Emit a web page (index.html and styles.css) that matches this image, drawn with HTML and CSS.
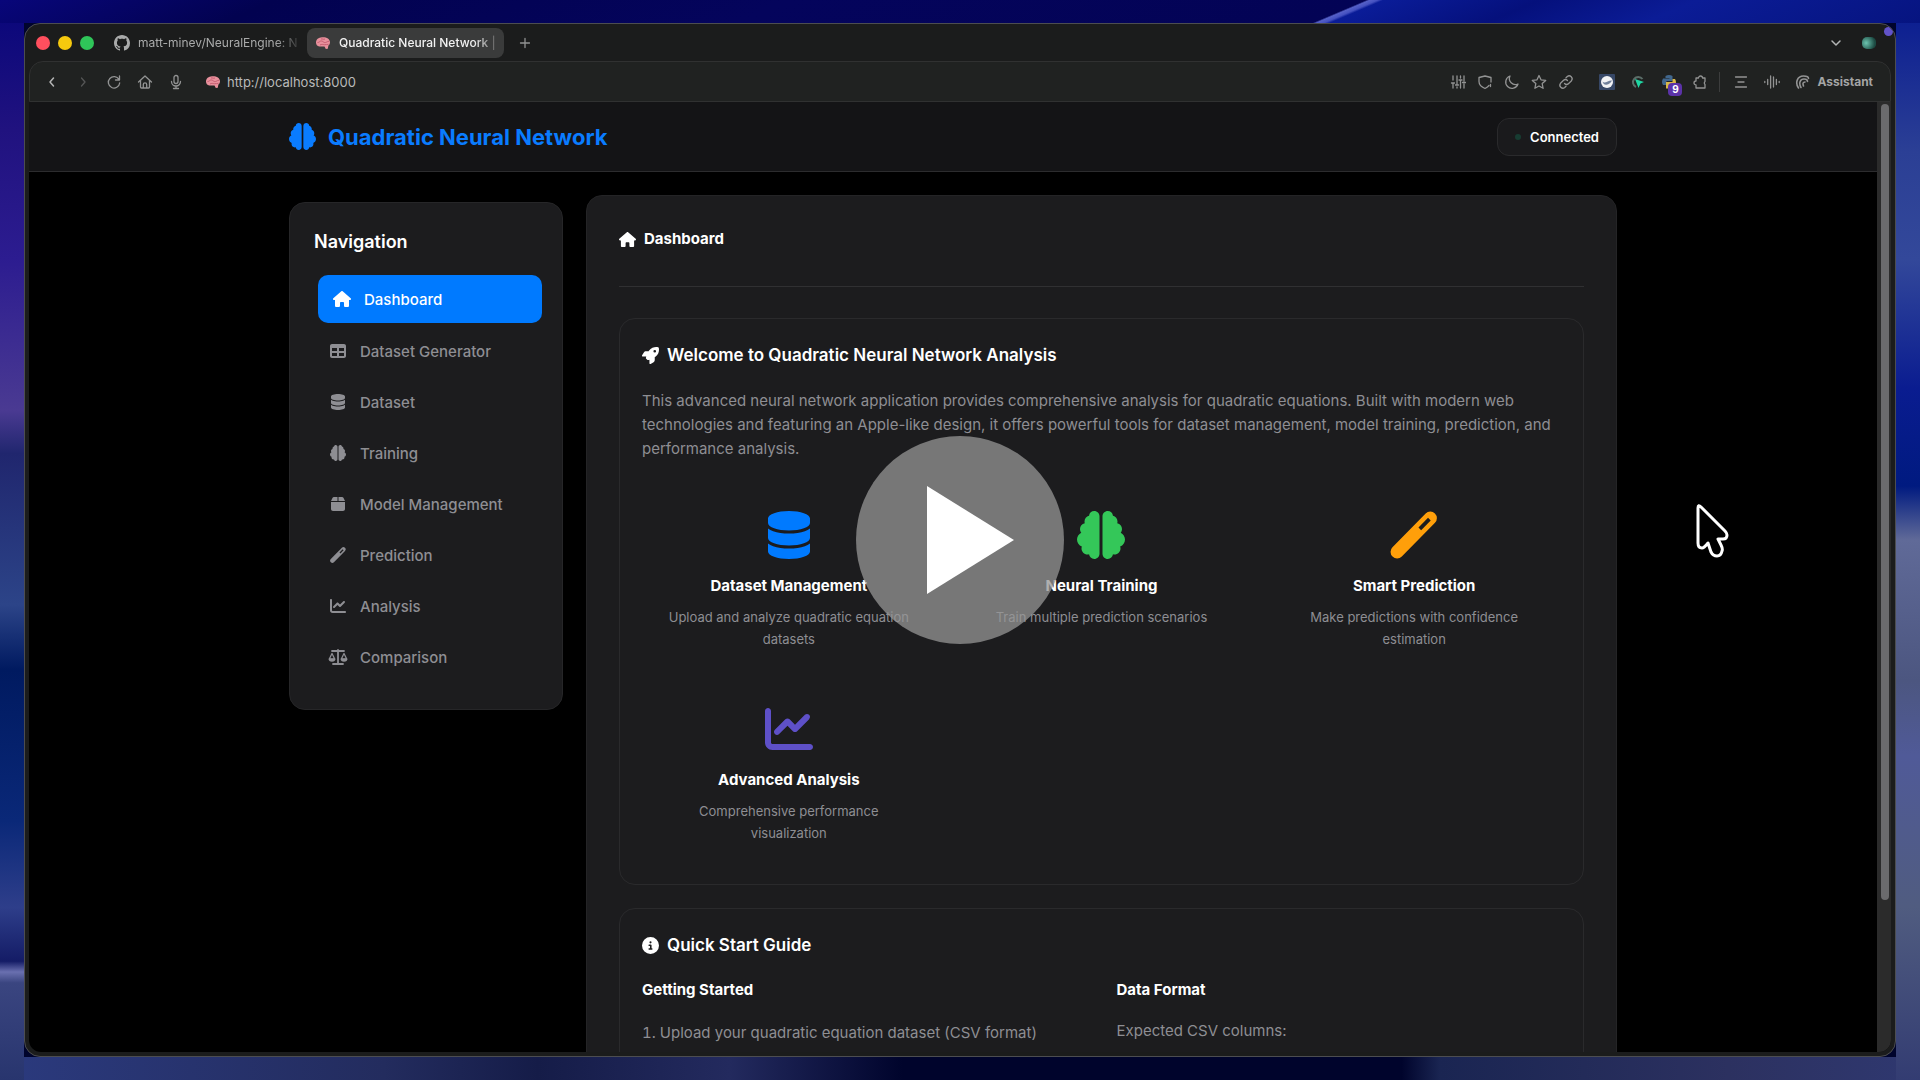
FILE: index.html
```html
<!DOCTYPE html>
<html lang="en">
<head>
<meta charset="utf-8">
<meta name="viewport" content="width=device-width, initial-scale=1">
<title>Quadratic Neural Network</title>
<link rel="stylesheet" href="styles.css">
</head>
<body class="desktop">
<svg class="defs" width="0" height="0" aria-hidden="true">
  <symbol id="house" viewBox="0 0 576 512"><path d="M575.8 255.5c0 18-15 32.1-32 32.1h-32l.7 160.2c0 2.7-.2 5.4-.5 8.1V472c0 22.1-17.9 40-40 40H456c-1.1 0-2.2 0-3.3-.1c-1.4 .1-2.8 .1-4.2 .1H416 392c-22.1 0-40-17.9-40-40V448 384c0-17.7-14.3-32-32-32H256c-17.7 0-32 14.3-32 32v64 24c0 22.1-17.9 40-40 40H160 128.1c-1.5 0-3-.1-4.5-.2c-1.2 .1-2.4 .2-3.6 .2H104c-22.1 0-40-17.9-40-40V360c0-.9 0-1.9 .1-2.8V287.6H32c-18 0-32-14-32-32.1c0-9 3-17 10-24L266.4 8c7-7 15-8 22-8s15 2 21 7L564.8 231.5c8 7 12 15 11 24z"/></symbol>
  <symbol id="table" viewBox="0 0 512 512"><path d="M64 256V160H224v96H64zm0 64H224v96H64V320zm224 96V320H448v96H288zM448 256H288V160H448v96zM64 32C28.7 32 0 60.7 0 96V416c0 35.3 28.7 64 64 64H448c35.3 0 64-28.7 64-64V96c0-35.3-28.7-64-64-64H64z"/></symbol>
  <symbol id="database" viewBox="0 0 448 512"><path d="M448 80v48c0 44.2-100.3 80-224 80S0 172.2 0 128V80C0 35.8 100.3 0 224 0S448 35.8 448 80zM393.2 214.7c20.8-7.4 39.9-16.9 54.8-28.6V288c0 44.2-100.3 80-224 80S0 332.2 0 288V186.1c14.9 11.8 34 21.2 54.8 28.6C99.7 230.7 159.5 240 224 240s124.3-9.3 169.2-25.3zM0 346.1c14.9 11.8 34 21.2 54.8 28.6C99.7 390.7 159.5 400 224 400s124.3-9.3 169.2-25.3c20.8-7.4 39.9-16.9 54.8-28.6V432c0 44.2-100.3 80-224 80S0 476.2 0 432V346.1z"/></symbol>
  <symbol id="brain" viewBox="0 0 512 512"><path d="M184 0c30.9 0 56 25.1 56 56V456c0 30.9-25.1 56-56 56c-28.9 0-52.7-21.9-55.7-50.1c-5.2 1.4-10.7 2.1-16.3 2.1c-35.3 0-64-28.7-64-64c0-7.4 1.3-14.6 3.6-21.2C21.4 367.4 0 338.2 0 304c0-31.9 18.7-59.5 45.8-72.3C37.1 220.8 32 207 32 192c0-30.7 21.6-56.3 50.4-62.6C80.8 123.9 80 118 80 112c0-29.9 20.6-55.1 48.3-62.1C131.3 21.9 155.1 0 184 0zM328 0c28.9 0 52.6 21.9 55.7 49.9c27.8 7 48.3 32.1 48.3 62.1c0 6-.8 11.9-2.4 17.4c28.8 6.2 50.4 31.9 50.4 62.6c0 15-5.1 28.8-13.8 39.7C493.3 244.5 512 272.1 512 304c0 34.2-21.4 63.4-51.6 74.8c2.3 6.6 3.6 13.8 3.6 21.2c0 35.3-28.7 64-64 64c-5.6 0-11.1-.7-16.3-2.1c-3 28.2-26.8 50.1-55.7 50.1c-30.9 0-56-25.1-56-56V56c0-30.9 25.1-56 56-56z"/></symbol>
  <symbol id="box" viewBox="0 0 448 512"><path d="M50.7 58.5L0 160H208V32H93.7C75.5 32 58.9 42.3 50.7 58.5zM240 160H448L397.3 58.5C389.1 42.3 372.5 32 354.3 32H240V160zm208 32H0V416c0 35.3 28.7 64 64 64H384c35.3 0 64-28.7 64-64V192z"/></symbol>
  <symbol id="vial" viewBox="0 0 512 512"><path fill="none" stroke="currentColor" stroke-width="140" stroke-linecap="round" d="M76 436 430 76"/><path class="vial-gap" stroke-width="40" d="M318 190 420 86"/></symbol>
  <symbol id="chart" viewBox="0 0 512 512"><path d="M64 64c0-17.7-14.3-32-32-32S0 46.3 0 64V400c0 44.2 35.8 80 80 80H480c17.7 0 32-14.3 32-32s-14.3-32-32-32H80c-8.8 0-16-7.2-16-16V64zm406.6 86.6c12.5-12.5 12.5-32.8 0-45.3s-32.8-12.5-45.3 0L320 210.7l-57.4-57.4c-12.5-12.5-32.8-12.5-45.3 0l-112 112c-12.5 12.5-12.5 32.8 0 45.3s32.8 12.5 45.3 0L240 221.3l57.4 57.4c12.5 12.5 32.8 12.5 45.3 0l128-128z"/></symbol>
  <symbol id="scale" viewBox="0 0 20 16"><g fill="none" stroke="currentColor" stroke-width="1.8" stroke-linecap="round" stroke-linejoin="round"><path d="M4 2h12M10 1v14M5 15h10"/><path d="M4 4.500 1.300 10h5.400zM16 4.500 13.300 10h5.400z" stroke-width="1.300"/></g><path d="M.6 9.800h6.800a3.400 3 0 0 1-6.800 0zM12.600 9.800h6.800a3.400 3 0 0 1-6.800 0z"/></symbol>
  <symbol id="rocket" viewBox="0 0 512 512"><path d="M156.6 384.9L125.7 354c-8.5-8.5-11.5-20.8-7.7-32.2c3-8.9 7-20.5 11.8-33.8L24 288c-8.6 0-16.6-4.6-20.9-12.1s-4.2-16.7 .2-24.1l52.5-88.5c13-21.9 36.5-35.3 61.9-35.3l82.3 0c2.4-4 4.8-7.7 7.2-11.3C289.1-4.1 411.1-8.1 483.9 5.300c11.6 2.1 20.6 11.2 22.8 22.8c13.4 72.9 9.3 194.8-111.4 276.7c-3.5 2.4-7.3 4.8-11.3 7.2v82.3c0 25.4-13.4 49-35.3 61.9l-88.5 52.5c-7.4 4.4-16.6 4.5-24.1 .2s-12.1-12.2-12.1-20.9V380.8c-14.1 4.9-26.4 8.9-35.7 11.9c-11.2 3.6-23.4 .5-31.8-7.8zM384 168a40 40 0 1 0 0-80 40 40 0 1 0 0 80z"/></symbol>
  <symbol id="info" viewBox="0 0 512 512"><path d="M256 512A256 256 0 1 0 256 0a256 256 0 1 0 0 512zM216 336h24V272H216c-13.3 0-24-10.7-24-24s10.7-24 24-24h48c13.3 0 24 10.7 24 24v88h8c13.3 0 24 10.7 24 24s-10.7 24-24 24H216c-13.3 0-24-10.7-24-24s10.7-24 24-24zm40-208a32 32 0 1 1 0 64 32 32 0 1 1 0-64z"/></symbol>
  <symbol id="favicon" viewBox="0 0 16 16"><path fill="#e8909c" d="M1 7.500C1 4.500 3.500 2.500 7 2.300c4.500-.3 8 1.700 8 5 0 1.500-.6 2.700-1.600 3.200l-.6 3.200-2 .3-1.300-2.500H4.300C2.300 11.300 1 9.700 1 7.500z"/><path fill="none" stroke="#c2586c" stroke-width=".9" d="M2.500 7.500c2 .2 2-1.800 4-1.500s2 2 4 1.500 2-1.500 3.500-1M5 10c1.500-1 3-.5 4.500-.3s2.500-.4 4-.4M6 4c1.500-.5 2 .8 4 0"/></symbol>
</svg>

<div class="window">
  <header class="tabbar">
    <div class="lights"><span class="light red"></span><span class="light yellow"></span><span class="light green"></span></div>
    <button class="tab">
      <svg class="tab-icon" viewBox="0 0 16 16" fill="#f5f5f5"><path d="M8 0C3.58 0 0 3.58 0 8c0 3.54 2.29 6.53 5.47 7.59.4.07.55-.17.55-.38 0-.19-.01-.82-.01-1.49-2.01.37-2.53-.49-2.69-.94-.09-.23-.48-.94-.82-1.13-.28-.15-.68-.52-.01-.53.63-.01 1.08.58 1.23.82.72 1.21 1.87.87 2.33.66.07-.52.28-.87.51-1.07-1.78-.2-3.64-.89-3.64-3.95 0-.87.31-1.59.82-2.15-.08-.2-.36-1.02.08-2.12 0 0 .67-.21 2.2.82.64-.18 1.32-.27 2-.27s1.36.09 2 .27c1.53-1.04 2.2-.82 2.2-.82.44 1.100.16 1.920.08 2.120.51.56.82 1.270.82 2.150 0 3.070-1.870 3.750-3.650 3.950.29.25.54.73.54 1.480 0 1.070-.01 1.930-.01 2.200 0 .21.15.46.55.38A8.010 8.010 0 0 0 16 8c0-4.420-3.580-8-8-8z"/></svg>
      <span class="tab-label">matt-minev/NeuralEngine: N</span>
    </button>
    <button class="tab active">
      <svg class="tab-icon"><use href="#favicon"/></svg>
      <span class="tab-label">Quadratic Neural Network |</span>
    </button>
    <button class="tool" aria-label="New tab"><svg class="ico" viewBox="0 0 16 16"><path d="M8 3.500v9M3.500 8h9"/></svg></button>
    <span class="spacer"></span>
    <button class="tool" aria-label="Tab list"><svg class="ico bright" viewBox="0 0 16 16"><path d="m4 6 4 4 4-4"/></svg></button>
    <button class="tool" aria-label="Profile"><span class="avatar"></span></button>
  </header>

  <div class="toolbar">
    <button class="tool" aria-label="Back"><svg class="ico bright" viewBox="0 0 16 16"><path d="M9.500 4 6 8l3.500 4"/></svg></button>
    <button class="tool" aria-label="Forward"><svg class="ico faint" viewBox="0 0 16 16"><path d="m6.500 4 3.500 4-3.500 4"/></svg></button>
    <button class="tool" aria-label="Reload"><svg class="ico" viewBox="0 0 16 16"><path d="M13 5.500A5.700 5.700 0 1 0 13.700 9M13.500 2v4h-4"/></svg></button>
    <button class="tool" aria-label="Home"><svg class="ico" viewBox="0 0 16 16"><path d="M1.500 8 8 2l6.500 6M3.500 6.500V13a1 1 0 0 0 1 1h7a1 1 0 0 0 1-1V6.500M6.300 14v-3.500a1.700 1.700 0 0 1 3.400 0V14"/></svg></button>
    <button class="tool" aria-label="Voice"><svg class="ico" viewBox="0 0 16 16"><rect x="6" y="1.500" width="4" height="8" rx="2"/><path d="M3.500 7.500a4.500 4.500 0 0 0 9 0M8 12v2.500M5.500 14.500h5"/></svg></button>
    <label class="address"><svg class="tab-icon"><use href="#favicon"/></svg><input class="url" aria-label="Address" value="http://localhost:8000"></label>
    <div class="tools">
      <button class="tool" aria-label="Settings"><svg class="ico" viewBox="0 0 16 16"><path d="M3 2v4M3 9v5M1.500 9h3M7 2v8M7 13v1M5.500 11h3M10.500 2v2M10.500 7v7M9 6h3M14 2v5M14 10v4M12.500 8.500h3"/></svg></button>
      <button class="tool" aria-label="Protection"><svg class="ico" viewBox="0 0 16 16"><path d="M12 11.500C10.800 13 8 14.500 8 14.500S2 12 2 7.500v-4L8 2l6 1.500V8M13.500 10.500v2"/></svg></button>
      <button class="tool" aria-label="Dark mode"><svg class="ico" viewBox="0 0 16 16"><path d="M6 2a6.300 6.300 0 1 0 8 8A6 6 0 0 1 6 2z"/></svg></button>
      <button class="tool" aria-label="Bookmark"><svg class="ico" viewBox="0 0 16 16"><path d="m8 1.500 2 4.300 4.700.6-3.500 3.200.9 4.700L8 12l-4.100 2.300.9-4.700L1.300 6.400 6 5.800z"/></svg></button>
      <button class="tool" aria-label="Copy link"><svg class="ico" viewBox="0 0 16 16"><path d="M6.500 9.500a3 3 0 0 0 4.200 0l2.800-2.800a3 3 0 0 0-4.200-4.200L8 3.800M9.500 6.500a3 3 0 0 0-4.200 0L2.500 9.300a3 3 0 0 0 4.200 4.200L8 12.200"/></svg></button>
    </div>
    <div class="tools extensions">
      <button class="tool" aria-label="Extension"><svg class="plain" viewBox="0 0 16 16"><rect width="16" height="16" rx="1" fill="#364766"/><circle cx="8" cy="8" r="6" fill="#f1f2f4"/><path d="M3.500 7.500c2 3 6-1.500 9.500-1-1 2-3 4-5.500 4.200S4 9.500 3.500 7.500z" fill="#6f7f9a"/></svg></button>
      <button class="tool" aria-label="Grammar"><svg class="plain" viewBox="0 0 16 16"><path d="M12.500 5A5.300 5.300 0 1 0 6 13" fill="none" stroke="#5b6d68" stroke-width="2"/><path d="m5 5 9 3-3.500 1.500L8.500 14z" fill="#1fd6a2"/></svg></button>
      <button class="tool" aria-label="Python, 9"><svg class="plain" viewBox="0 0 16 16"><path d="M4.500 2q3.500-2 7 0v5h-6v4H2q-2-3 0-6.500h6.500V4h-4z" fill="#41678d"/><path d="M11.500 5H14q2 3 0 6.500H8v3H5V8h6.500z" fill="#d9b84a"/></svg><span class="badge">9</span></button>
      <button class="tool" aria-label="Extensions"><svg class="ico" viewBox="0 0 16 16"><path d="M4 4h2.500a2 2 0 0 1 4 0H13v3.500a2 2 0 0 0 0 3V14H4v-3a2 2 0 1 1 0-4z"/></svg></button>
    </div>
    <span class="rule"></span>
    <div class="tools extensions">
      <button class="tool" aria-label="Reader"><svg class="ico" viewBox="0 0 16 16"><path d="M2.500 3h11M5 8h6M2.500 13h11"/></svg></button>
      <button class="tool" aria-label="Listen"><svg class="ico" viewBox="0 0 16 16"><path d="M.8 7.500v1M3.700 5.500v5M6.600 2v12M9.500 3v10M12.400 5.500v5M15.200 7.500v1"/></svg></button>
      <button class="assistant"><svg class="ico thick" viewBox="0 0 16 16"><path d="M3.500 14C0 9 2 2 8.500 2c3 0 5 1 5 2.500M6 13.500C3.500 9.500 5 5 9 5c2.500 0 3.500 1 3.500 2.500M8.500 12C7.500 9.500 8 8 10 8"/></svg>Assistant</button>
    </div>
  </div>

  <div class="viewport">
    <div class="page">
      <header class="site-header">
        <div class="container header-row">
          <a class="brand" href="#"><svg class="brand-icon"><use href="#brain"/></svg>Quadratic Neural Network</a>
          <div class="status"><span class="status-dot"></span>Connected</div>
        </div>
      </header>
      <div class="container layout">
        <nav class="sidebar">
          <h2 class="nav-title">Navigation</h2>
          <a class="nav-link current" href="#"><svg class="nav-icon"><use href="#house"/></svg>Dashboard</a>
          <a class="nav-link" href="#"><svg class="nav-icon"><use href="#table"/></svg>Dataset Generator</a>
          <a class="nav-link" href="#"><svg class="nav-icon"><use href="#database"/></svg>Dataset</a>
          <a class="nav-link" href="#"><svg class="nav-icon"><use href="#brain"/></svg>Training</a>
          <a class="nav-link" href="#"><svg class="nav-icon"><use href="#box"/></svg>Model Management</a>
          <a class="nav-link" href="#"><svg class="nav-icon"><use href="#vial"/></svg>Prediction</a>
          <a class="nav-link" href="#"><svg class="nav-icon"><use href="#chart"/></svg>Analysis</a>
          <a class="nav-link" href="#"><svg class="nav-icon"><use href="#scale"/></svg>Comparison</a>
        </nav>
        <main class="main">
          <h1 class="main-title"><svg class="title-icon"><use href="#house"/></svg>Dashboard</h1>
          <section class="card">
            <h2 class="card-title"><svg class="title-icon"><use href="#rocket"/></svg>Welcome to Quadratic Neural Network Analysis</h2>
            <p class="lead">This advanced neural network application provides comprehensive analysis for quadratic equations. Built with modern web technologies and featuring an Apple-like design, it offers powerful tools for dataset management, model training, prediction, and performance analysis.</p>
            <div class="features">
              <article class="feature"><svg class="feature-icon blue"><use href="#database"/></svg><h3 class="feature-title">Dataset Management</h3><p class="feature-text">Upload and analyze quadratic equation datasets</p></article>
              <article class="feature"><svg class="feature-icon mint"><use href="#brain"/></svg><h3 class="feature-title">Neural Training</h3><p class="feature-text">Train multiple prediction scenarios</p></article>
              <article class="feature"><svg class="feature-icon orange"><use href="#vial"/></svg><h3 class="feature-title">Smart Prediction</h3><p class="feature-text">Make predictions with confidence estimation</p></article>
              <article class="feature"><svg class="feature-icon violet"><use href="#chart"/></svg><h3 class="feature-title">Advanced Analysis</h3><p class="feature-text">Comprehensive performance visualization</p></article>
            </div>
          </section>
          <section class="card guide">
            <h2 class="card-title"><svg class="title-icon"><use href="#info"/></svg>Quick Start Guide</h2>
            <div class="guide-grid">
              <div><h3 class="guide-title">Getting Started</h3><ol class="steps"><li>Upload your quadratic equation dataset (CSV format)</li></ol></div>
              <div><h3 class="guide-title">Data Format</h3><p class="guide-text">Expected CSV columns:</p></div>
            </div>
          </section>
        </main>
      </div>
    </div>
    <div class="scrollbar"><div class="thumb"></div></div>
  </div>
  <span class="corner-dot"></span>
</div>

<button class="play" aria-label="Play"><svg class="play-icon" viewBox="0 0 87 108"><path d="M0 0 87 54 0 108z"/></svg></button>
<svg class="cursor" viewBox="0 0 34 54"><path d="M3 4v35q0 5 4 5 2 0 6-5l3 9q2 4 6 4t5-5q1-2-1-6l-3-6h5q4 0 4-4 0-2-2-4L6 3Q3 0 3 4z"/></svg>
</body>
</html>
```
FILE: styles.css
```css
* { box-sizing: border-box; }
h1, h2, h3, p, ol { margin: 0; padding: 0; }
button { font: inherit; color: inherit; background: none; border: 0; padding: 0; }
a { color: inherit; text-decoration: none; }
svg { display: block; flex: none; fill: currentColor; }

.defs { position: absolute; }

.desktop {
  margin: 0;
  height: 100vh;
  padding: 23px 24px;
  overflow: hidden;
  font-family: Inter, "Liberation Sans", sans-serif;
  color: #fff;
  background:
    linear-gradient(157deg, #08067a, #020250 14%, #04045c 40%, #030355 69.2%, #5560c8 69.4%, #4450c0 69.8%, #0a1c98 70.1%, #05107c 78%, #0b1c96 86%, #061480) top / 100% 23px no-repeat,
    linear-gradient(#08067a, #20127f 12%, #2c1c90 24%, #4a3a92 38%, #20266e 42%, #2c4488 56%, #001a60 62%, #0a2878 76%, #2e3e8a 84%, #141c66 89%, #6a70b0 90%, #3a4580 91%, #28356e) left / 24px 100% no-repeat,
    linear-gradient(#081a90, #2b3f95 14%, #33489a 24%, #0a1c90 36%, #001a80 45%, #606a98 50%, #4c5680 63%, #505a98 70%, #505c80 84%, #333c72) right / 24px 100% no-repeat,
    linear-gradient(90deg, #2b3a7e, #232c5e 20%, #151c48 28%, #232a5e 38%, #00042c 47%, #00042c 73%, #1a2552 75%, #2c3160 90%, #2f3870) bottom / 100% 23px no-repeat,
    #00042c;
}

.window {
  position: relative;
  display: flex;
  flex-direction: column;
  height: 100%;
  padding: 0 4px 4px;
  background: #1b1c1c;
  border: 1px solid #4c4d50;
  border-radius: 16px;
  overflow: hidden;
}

.tabbar { display: flex; align-items: center; height: 37px; flex: none; padding: 0 6px 0 7px; font-size: 12px; }
.lights { display: flex; gap: 8px; margin-right: 12px; }
.light { width: 14px; height: 14px; border-radius: 50%; }
.red { background: #ff4f5e; }
.yellow { background: #f6c90e; }
.green { background: #2fc559; }
.tab { display: flex; align-items: center; gap: 8px; width: 197px; height: 30px; margin-right: 4px; padding: 0 4px 0 8px; border-radius: 8px; color: #a9aaaa; }
.tab.active { background: #3a3b3b; color: #f2f2f2; }
.tab-icon { width: 16px; height: 16px; }
.tab-label { white-space: nowrap; mask-image: linear-gradient(90deg, #000 86%, rgba(0, 0, 0, .2)); }
.tab.active .tab-label { font-weight: 500; }
.spacer { flex: 1; }
.avatar { width: 14px; height: 12px; border-radius: 5px; background: radial-gradient(circle at 30% 50%, #6cc4b0, #1c4a42 75%); }
.corner-dot { position: absolute; top: 3px; right: 2px; width: 9px; height: 9px; border-radius: 50%; background: #6253c8; }

.tool { position: relative; display: flex; align-items: center; justify-content: center; width: 31px; height: 30px; }
.ico { width: 16px; height: 16px; fill: none; stroke: #929393; stroke-width: 1.3; stroke-linecap: round; stroke-linejoin: round; }
.tabbar .tool { width: 33px; }
.bright { stroke: #b4b5b5; stroke-width: 1.5; }
.faint { stroke: #555656; }
.thick { stroke-width: 1.6; }
.plain { width: 16px; height: 16px; }

.toolbar {
  display: flex; align-items: center; flex: none;
  height: 41px; padding: 0 17px 0 6px;
  background: #202221; border: 1px solid #303131; border-radius: 14px 14px 0 0;
}
.address { display: flex; align-items: center; gap: 6px; flex: 1; margin-left: 14px; }
.url { flex: 1; min-width: 0; border: 0; padding: 0; background: none; color: #b9baba; font: 13px Inter, "Liberation Sans", sans-serif; }
.tools { display: flex; }
.tools .tool { width: 27px; }
.extensions { margin-left: 12px; }
.extensions .tool { width: 31px; }
.rule { width: 1px; height: 20px; margin-left: 4px; background: #3c3d3d; }
.rule + .extensions { margin-left: 5px; }
.badge { position: absolute; right: 2px; bottom: 1px; width: 14px; height: 13px; border-radius: 4px; background: #5b32a8; color: #fff; font-size: 10px; font-weight: 700; line-height: 13px; text-align: center; }
.assistant { display: flex; align-items: center; gap: 6px; margin-left: 8px; color: #a4a5a5; font-size: 12px; font-weight: 700; }

.viewport { display: flex; flex: 1; min-height: 0; border-radius: 0 0 12px 12px; overflow: hidden; background: #000; }
.page { flex: 1; min-width: 0; overflow: hidden; }
.scrollbar { width: 14px; padding: 2px 2px 0 4px; background: #2b2b2b; }
.thumb { height: 84%; border-radius: 4px; background: #6b6b6d; }

.container { max-width: 1328px; margin: 0 auto; }
.site-header { background: #141416; border-bottom: 1px solid #2c2c2e; }
.header-row { display: flex; align-items: center; justify-content: space-between; height: 69px; }
.brand { display: flex; align-items: center; gap: 12px; color: #0a7cff; font-size: 22px; font-weight: 700; }
.brand-icon { width: 27px; height: 27px; }
.status { display: flex; align-items: center; gap: 9px; height: 38px; padding: 0 17px; border: 1px solid #2a2a2c; border-radius: 12px; background: #1a1a1c; font-size: 13px; font-weight: 600; }
.status-dot { width: 6px; height: 6px; border-radius: 50%; background: #173c32; }

.layout { display: grid; grid-template-columns: 274px minmax(0, 1fr); gap: 23px; align-items: start; padding-top: 23px; }
.sidebar { margin-top: 7px; padding: 25px 24px; border: 1px solid #262628; border-radius: 16px; background: #1c1c1e; }
.nav-title { margin-bottom: 19px; font-size: 18px; font-weight: 600; line-height: 28px; }
.nav-link { display: flex; align-items: center; gap: 12px; height: 48px; margin-bottom: 3px; padding: 0 14px; border-radius: 10px; color: #8e8e93; font-size: 15px; font-weight: 500; }
.nav-link.current { position: relative; left: 4px; margin-bottom: 4px; background: #007aff; color: #fff; }
.nav-icon { width: 20px; height: 16px; }

.main { padding: 32px; border: 1px solid #242426; border-radius: 16px; background: #1c1c1e; }
.main-title { display: flex; align-items: center; gap: 8px; margin-bottom: 31px; padding-bottom: 36px; border-bottom: 1px solid #303032; font-size: 15px; font-weight: 700; line-height: 22px; }
.title-icon { width: 17px; height: 17px; }
.card { margin-bottom: 23px; padding: 22px 22px 22px; border: 1px solid #2a2a2c; border-radius: 16px; }
.card-title { display: flex; align-items: center; gap: 8px; margin-bottom: 20px; font-size: 17px; font-weight: 600; line-height: 28px; }
.lead { color: #8e8e93; font-size: 15px; line-height: 24px; }
.features { display: grid; grid-template-columns: repeat(3, minmax(0, 1fr)); gap: 19px; margin-top: 32px; }
.feature { display: flex; flex-direction: column; align-items: center; padding: 18px; text-align: center; }
.feature-icon { width: 48px; height: 48px; }
.blue { color: #007aff; }
.mint { color: #34c759; }
.orange { color: #ff9f0a; }
.violet { color: #5e50c8; }
.feature-title { margin: 15px 0 8px; font-size: 15px; font-weight: 700; line-height: 24px; }
.feature-text { color: #8e8e93; font-size: 13px; line-height: 22px; }
.vial-gap { stroke: #1c1c1e; }

.guide { padding-bottom: 96px; }
.guide-grid { display: grid; grid-template-columns: 1fr 1fr; gap: 30px; }
.guide-title { margin-bottom: 20px; font-size: 15px; font-weight: 700; line-height: 22px; }
.steps { list-style-position: inside; color: #8e8e93; font-size: 15px; line-height: 24px; }
.guide-text { color: #8e8e93; font-size: 15px; line-height: 20px; }

.play {
  position: absolute; top: 50%; left: 50%;
  display: flex; align-items: center; justify-content: center;
  width: 208px; height: 208px; margin: -104px 0 0 -104px; padding-left: 21px;
  border-radius: 50%; background: rgba(150, 150, 150, .75);
}
.play-icon { width: 87px; height: 108px; fill: #fff; }
.cursor { position: absolute; left: 1695px; top: 504px; width: 34px; height: 54px; fill: #000; stroke: #fff; stroke-width: 3; stroke-linejoin: round; }
```
